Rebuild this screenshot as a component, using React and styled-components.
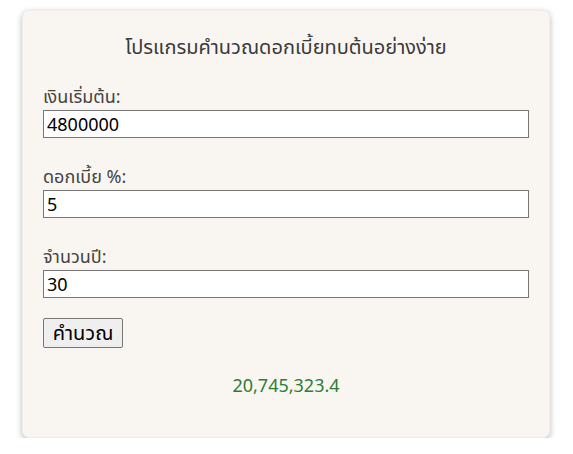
import React, { useState } from "react"
import styled, { createGlobalStyle } from "styled-components"

const GlobalStyle = createGlobalStyle`
  body {
    margin: 0;
    background: #ffffff;
    font-family: "Noto Sans", "Noto Sans Thai", "DejaVu Sans", sans-serif;
  }
`

const Page = styled.div`
  padding: 10px 0 0 22px;
`

const Card = styled.div`
  width: 486px;
  height: 404px;
  padding: 22px 20px 0 20px;
  background: #f9f6f2;
  border: 1px solid #eeeeee;
  border-radius: 7px;
  box-shadow: 0 2px 6px rgba(0, 0, 0, 0.28);
  display: flex;
  flex-direction: column;
`

const Title = styled.h2`
  margin: 0 0 21px;
  font-size: 20px;
  font-weight: 400;
  line-height: 28px;
  text-align: center;
  color: #3a3a3a;
`

const Fields = styled.div`
  display: grid;
  gap: 24px;
`

const Field = styled.div`
  display: flex;
  flex-direction: column;
`

const Label = styled.label`
  font-size: 18px;
  line-height: 28px;
  color: #444;
`

const Input = styled.input`
  box-sizing: border-box;
  width: 486px;
  height: 28px;
  margin: 0;
  padding: 0 3px;
  font-family: inherit;
  font-size: 18px;
  color: #000;
  background: #fff;
  border: 1px solid #767676;
  border-radius: 0;
`

const Button = styled.button`
  align-self: flex-start;
  box-sizing: border-box;
  width: 80px;
  height: 30px;
  margin-top: 20px;
  padding: 0;
  font-family: inherit;
  font-size: 20px;
  color: #000;
  background: #efefef;
  border: 1px solid #767676;
  border-radius: 2px;
`

const Result = styled.p`
  margin: 23px 0 0;
  font-size: 18px;
  line-height: 28px;
  text-align: center;
  color: #2e7d32;
`

const fields = [
  { id: "principal", label: "เงินเริ่มต้น:", value: "4800000" },
  { id: "rate", label: "ดอกเบี้ย %:", value: "5" },
  { id: "years", label: "จำนวนปี:", value: "30" },
]

const App = () => {
  const [values, setValues] = useState(() =>
    Object.fromEntries(fields.map(f => [f.id, f.value]))
  )

  const calc = () => {
    const p = parseFloat(values.principal) || 0
    const r = (parseFloat(values.rate) || 0) / 100
    const n = parseFloat(values.years) || 0
    return (p * Math.pow(1 + r, n)).toLocaleString("en-US", {
      maximumFractionDigits: 1,
    })
  }

  const [result, setResult] = useState(calc)

  return (
    <>
      <GlobalStyle />
      <Page>
        <Card>
          <Title>โปรแกรมคำนวณดอกเบี้ยทบต้นอย่างง่าย</Title>
          <Fields>
            {fields.map(f => (
              <Field key={f.id}>
                <Label htmlFor={f.id}>{f.label}</Label>
                <Input
                  id={f.id}
                  value={values[f.id]}
                  onChange={e => setValues({ ...values, [f.id]: e.target.value })}
                />
              </Field>
            ))}
          </Fields>
          <Button onClick={() => setResult(calc())}>คำนวณ</Button>
          <Result>{result}</Result>
        </Card>
      </Page>
    </>
  )
}

export default App
